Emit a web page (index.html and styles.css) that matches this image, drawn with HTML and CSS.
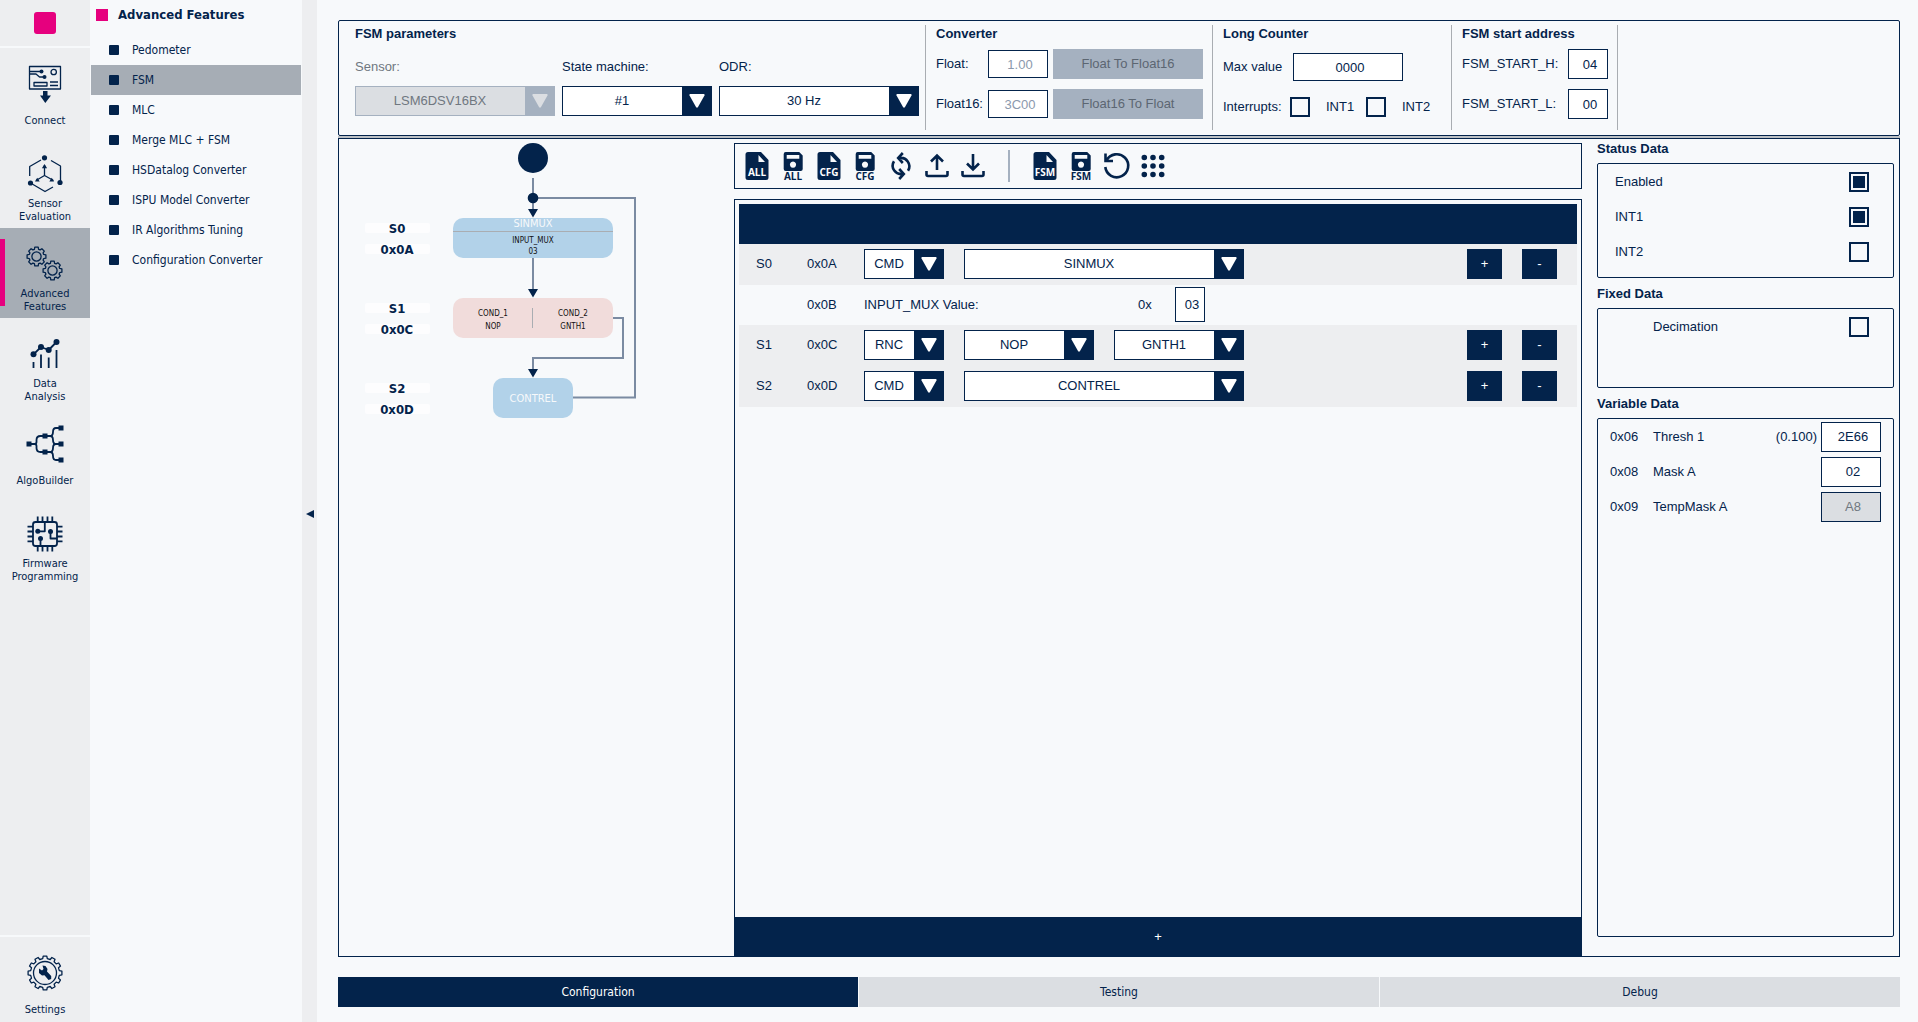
FILE: index.html
```html
<!DOCTYPE html>
<html lang="en">
<head>
<meta charset="utf-8">
<title>Advanced Features - FSM</title>
<link rel="stylesheet" href="styles.css">
</head>
<body>
<svg class="defs" aria-hidden="true">
  <symbol id="arrow-down" viewBox="0 0 16 14"><path d="M1 0h14q1 .5.5 1.500L9 13q-1 1.500-2 0L.5 1.500Q0 .5 1 0z"/></symbol>
  <symbol id="gear" viewBox="-11 -11 22 22"><path d="M7.200-2.100 9.400-1.700V1.700L7.200 2.100 6.600 3.600 7.800 5.400 5.400 7.800 3.600 6.600 2.100 7.200 1.700 9.400H-1.700L-2.100 7.200-3.600 6.600-5.400 7.800-7.800 5.400-6.600 3.600-7.200 2.100-9.400 1.700V-1.700L-7.200-2.100-6.600-3.600-7.800-5.400-5.400-7.800-3.600-6.600-2.100-7.200-1.700-9.400H1.700L2.100-7.200 3.600-6.600 5.400-7.800 7.800-5.400 6.600-3.600z"/><circle r="4.600"/></symbol>
  <symbol id="file" viewBox="0 0 36 36"><path fill-rule="evenodd" d="M9 4h13l7.500 8v17.500a2.500 2.500 0 0 1-2.500 2.500H9a2.500 2.500 0 0 1-2.500-2.500v-23A2.500 2.500 0 0 1 9 4zm10.500 3v7H26z"/></symbol>
  <symbol id="disk" viewBox="0 0 36 36"><path fill-rule="evenodd" d="M10.700 4h13.500l3.500 3.500V21a2 2 0 0 1-2 2h-15a2 2 0 0 1-2-2V6a2 2 0 0 1 2-2zm1 3v3.700h12.600V7zM18 13.500a3.100 3.100 0 1 0 .01 0z"/></symbol>
</svg>

<nav class="rail" aria-label="Sections">
  <div class="rail-logo"><span class="logo"></span></div>
  <a class="rail-item" href="#connect">
    <svg class="rail-icon" viewBox="0 0 38 38"><g class="line"><path d="M3.500 1.500h31V24h-31zM4 6.500h11M4 9h6l3.500 3H18M8 17.500h13v3.500H8zM24 17h8M24 20.500h8"/><circle cx="27.700" cy="7" r="2.700"/></g><circle cx="15.500" cy="6.500" r="2"/><circle cx="18.500" cy="12" r="2"/><path d="M17 26h4.500v4.500H25L19.300 38 14 30.500h3z"/></svg>
    <span>Connect</span>
  </a>
  <a class="rail-item" href="#sensor">
    <svg class="rail-icon" viewBox="0 0 38 38"><path class="line" d="M15 5 3.700 11.500V21M25 5.500l9.500 5.500v16M4.500 28 19 36.500l8-4.500M18.500 10v10.500L10 25.500M18.500 20.500l9 5"/><circle cx="18.500" cy="2.800" r="2.600"/><circle cx="34" cy="27.500" r="2.600"/><circle cx="4.500" cy="28" r="2.600"/><path d="M18.500 9l2.600 4.200h-5.200zM9 26.500l2.200-3.800 2.500 3.900zM28 26.500l-2.200-3.800-2.500 3.900z"/></svg>
    <span>Sensor<br>Evaluation</span>
  </a>
  <a class="rail-item active" href="#advanced">
    <svg class="rail-icon" viewBox="0 0 38 38"><g class="line"><use href="#gear" x="-.5" y=".5" width="22" height="22"/><use href="#gear" x="15.500" y="14.500" width="22" height="22"/></g></svg>
    <span>Advanced<br>Features</span>
  </a>
  <a class="rail-item" href="#data">
    <svg class="rail-icon" viewBox="0 0 38 38"><path class="line heavy" d="M7.500 19.300 15 12l7.700 3 7.800-8M7.500 27v6M15 19.500V33M22.700 22.500V33M30.500 15v18"/><circle cx="7.500" cy="19.300" r="3"/><circle cx="15" cy="12" r="3"/><circle cx="22.700" cy="15" r="3"/><circle cx="30.500" cy="7" r="3"/></svg>
    <span>Data<br>Analysis</span>
  </a>
  <a class="rail-item" href="#algo">
    <svg class="rail-icon" viewBox="0 0 38 38"><path class="line heavy" d="M3 19h5.500q2 0 2-2v-2q0-4 4-4H24q3 0 3-4t3-4h5M8.500 19q2 0 2 2v2q0 4 4 4H24q3 0 3 4t3 4h5M24 11q3 0 3 4t3 4h5M24 27q3 0 3-4t3-4"/><path d="M.5 16.500h5v5h-5zM16.500 8.500h5v5h-5zM16.500 24.500h5v5h-5zM32.500.5h5v5h-5zM32.500 16.500h5v5h-5zM32.500 32.500h5v5h-5z"/></svg>
    <span>AlgoBuilder</span>
  </a>
  <a class="rail-item" href="#firmware">
    <svg class="rail-icon" viewBox="0 0 38 38"><g class="line heavy"><rect x="7" y="7" width="24" height="24" rx="2.500"/><path d="M11.700 1.500V7M16.500 1.500V7M21.500 1.500V7M26.300 1.500V7M11.700 31v5.500M16.500 31v5.500M21.500 31v5.500M26.300 31v5.500M1.500 11.700H7M1.500 16.500H7M1.500 21.500H7M1.500 26.300H7M31 11.700h5.500M31 16.500h5.500M31 21.500h5.500M31 26.300h5.500M11.800 16.300h7V7M24.500 16.500v7H31M14.500 23.500V31"/></g><circle cx="11.800" cy="16.300" r="2.500"/><circle cx="24.500" cy="16.500" r="2.500"/><circle cx="14.500" cy="23.500" r="2.500"/></svg>
    <span>Firmware<br>Programming</span>
  </a>
  <a class="rail-item rail-settings" href="#settings">
    <svg class="rail-icon" viewBox="-19 -19 38 38"><g class="line"><path d="M14.300-2.300 16.900-1.800V1.800L14.300 2.300 13.500 5.200 15.500 6.900 13.700 10 11.200 9.100 9.100 11.200 10 13.700 6.900 15.500 5.200 13.500 2.300 14.300 1.800 16.900H-1.800L-2.300 14.300-5.200 13.500-6.900 15.500-10 13.700-9.100 11.200-11.200 9.100-13.700 10-15.500 6.900-13.500 5.200-14.300 2.300-16.900 1.800V-1.800L-14.300-2.300-13.500-5.200-15.500-6.900-13.700-10-11.200-9.100-9.100-11.200-10-13.700-6.900-15.500-5.200-13.500-2.300-14.300-1.800-16.900H1.800L2.300-14.300 5.200-13.500 6.900-15.500 10-13.700 9.100-11.200 11.200-9.100 13.700-10 15.500-6.900 13.500-5.200z"/><circle r="11.500"/></g><path d="M-6-4.500V0l3 2.500 2.500-.3L3.500 7l2.700-1V3L2-1.500 2.500-4 .5-7-2.500-7.500-1.500-4-3-2.500z"/></svg>
    <span>Settings</span>
  </a>
</nav>

<aside class="subnav">
  <h1>Advanced Features</h1>
  <ul>
    <li><a href="#pedometer">Pedometer</a></li>
    <li><a class="current" href="#fsm">FSM</a></li>
    <li><a href="#mlc">MLC</a></li>
    <li><a href="#merge">Merge MLC + FSM</a></li>
    <li><a href="#hsdatalog">HSDatalog Converter</a></li>
    <li><a href="#ispu">ISPU Model Converter</a></li>
    <li><a href="#ir">IR Algorithms Tuning</a></li>
    <li><a href="#config">Configuration Converter</a></li>
  </ul>
</aside>
<button class="collapse" aria-label="Collapse menu"><svg width="8" height="8" viewBox="0 0 8 8"><path d="M8 0v8L0 4z"/></svg></button>

<main>
  <div class="params">
    <section class="param-machine">
      <h2>FSM parameters</h2>
      <div class="combos">
        <div class="disabled wide"><label for="sensor">Sensor:</label>
          <span class="combo"><select id="sensor" disabled><option>LSM6DSV16BX</option></select><i><svg><use href="#arrow-down"/></svg></i></span></div>
        <div><label for="machine">State machine:</label>
          <span class="combo"><select id="machine"><option>#1</option></select><i><svg><use href="#arrow-down"/></svg></i></span></div>
        <div class="wide"><label for="odr">ODR:</label>
          <span class="combo"><select id="odr"><option>30 Hz</option></select><i><svg><use href="#arrow-down"/></svg></i></span></div>
      </div>
    </section>
    <section class="param-converter">
      <h2>Converter</h2>
      <div class="grid">
        <label for="float">Float:</label><input id="float" class="hint" value="1.00"><button disabled>Float To Float16</button>
        <label for="float16">Float16:</label><input id="float16" class="hint" value="3C00"><button disabled>Float16 To Float</button>
      </div>
    </section>
    <section class="param-counter">
      <h2>Long Counter</h2>
      <div class="max-row"><label for="maxv">Max value</label><input id="maxv" value="0000"></div>
      <div class="int-row"><span>Interrupts:</span>
        <input type="checkbox" id="lc1"><label for="lc1">INT1</label>
        <input type="checkbox" id="lc2"><label for="lc2">INT2</label></div>
    </section>
    <section class="param-address">
      <h2>FSM start address</h2>
      <div class="grid">
        <label for="sth">FSM_START_H:</label><input id="sth" value="04">
        <label for="stl">FSM_START_L:</label><input id="stl" value="00">
      </div>
    </section>
  </div>
  <div class="splitter"></div>

  <div class="workspace">
    <div class="diagram">
      <svg width="394" height="300" viewBox="0 0 394 300">
        <g class="wires">
          <path d="M194 39v35M199 59h97v199.500h-62M194 119v35M274 179h10v40h-90v15"/>
        </g>
        <g class="ink">
          <circle cx="194" cy="19" r="15"/><circle cx="194" cy="59" r="5.300"/>
          <path d="M189 70h10l-5 8.500zM189 150h10l-5 8.500zM189 230h10l-5 8.500z"/>
        </g>
        <rect class="cmd" x="114" y="79" width="160" height="40" rx="10"/>
        <path class="rule" d="M114 92.500h160"/>
        <text class="node-name" x="194" y="88">SINMUX</text>
        <text class="node-arg" x="194" y="104">INPUT_MUX</text>
        <text class="node-arg" x="194" y="115">03</text>
        <rect class="rnc" x="114" y="159" width="160" height="40" rx="10"/>
        <path class="rule" d="M193.500 169v20"/>
        <text class="node-arg" x="154" y="177">COND_1</text>
        <text class="node-arg" x="154" y="190">NOP</text>
        <text class="node-arg" x="234" y="177">COND_2</text>
        <text class="node-arg" x="234" y="190">GNTH1</text>
        <rect class="cmd" x="154" y="239" width="80" height="40" rx="10"/>
        <text class="node-name" x="194" y="263">CONTREL</text>
        <g class="tags">
          <rect x="26" y="84" width="65" height="10" rx="2"/><rect x="26" y="105" width="65" height="10" rx="2"/>
          <rect x="26" y="164" width="65" height="10" rx="2"/><rect x="26" y="185" width="65" height="10" rx="2"/>
          <rect x="26" y="244" width="65" height="10" rx="2"/><rect x="26" y="265" width="65" height="10" rx="2"/>
          <text x="58" y="94">S0</text><text x="58" y="115">0x0A</text>
          <text x="58" y="174">S1</text><text x="58" y="195">0x0C</text>
          <text x="58" y="254">S2</text><text x="58" y="275">0x0D</text>
        </g>
      </svg>
    </div>

    <div class="editor">
      <div class="toolbar" role="toolbar">
        <button aria-label="Load all"><svg viewBox="0 0 36 36"><use href="#file"/><text class="on" x="18" y="28">ALL</text></svg></button>
        <button aria-label="Save all"><svg viewBox="0 0 36 36"><use href="#disk"/><text x="18" y="32">ALL</text></svg></button>
        <button aria-label="Load configuration"><svg viewBox="0 0 36 36"><use href="#file"/><text class="on" x="18" y="28">CFG</text></svg></button>
        <button aria-label="Save configuration"><svg viewBox="0 0 36 36"><use href="#disk"/><text x="18" y="32">CFG</text></svg></button>
        <button aria-label="Refresh"><svg viewBox="0 0 36 36"><path class="stroke" d="M16 10.200a8.300 8.300 0 0 1 9 12.500M19.800 5l-4.600 5 4.600 5M20 25.800a8.300 8.300 0 0 1-9-12.500M16.200 31l4.600-5-4.600-5"/></svg></button>
        <button aria-label="Upload"><svg viewBox="0 0 36 36"><path class="stroke" d="M18 22V8M12 13.500l6-6 6 6M7.500 23v3.500q0 1.500 1.500 1.500h18q1.500 0 1.500-1.500V23"/></svg></button>
        <button aria-label="Download"><svg viewBox="0 0 36 36"><path class="stroke" d="M18 6v15M12 15.500l6 6 6-6M7.500 23v3.500q0 1.500 1.500 1.500h18q1.500 0 1.500-1.500V23"/></svg></button>
        <span class="bar"></span>
        <button aria-label="Load FSM"><svg viewBox="0 0 36 36"><use href="#file"/><text class="on" x="18" y="28">FSM</text></svg></button>
        <button aria-label="Save FSM"><svg viewBox="0 0 36 36"><use href="#disk"/><text x="18" y="32">FSM</text></svg></button>
        <button aria-label="Reset"><svg viewBox="0 0 36 36"><path class="stroke" d="M6.500 5.500v7.500H14M7.500 12.500a11.500 11.500 0 1 1-1.200 6.500"/></svg></button>
        <button aria-label="Grid"><svg viewBox="0 0 36 36"><path class="dots" d="M9.300 9.500h0M18 9.500h0M26.700 9.500h0M9.300 18h0M18 18h0M26.700 18h0M9.300 26.500h0M18 26.500h0M26.700 26.500h0"/></svg></button>
      </div>

      <div class="steps">
        <div class="steps-body">
          <table>
            <colgroup><col class="c-state"><col class="c-addr"><col class="c-type"><col class="c-op"><col><col class="c-act"></colgroup>
            <thead><tr><th colspan="6"></th></tr></thead>
            <tbody>
              <tr>
                <td>S0</td><td>0x0A</td>
                <td><span class="combo type"><select aria-label="S0 type"><option>CMD</option></select><i><svg><use href="#arrow-down"/></svg></i></span></td>
                <td colspan="2"><span class="combo full"><select aria-label="S0 command"><option>SINMUX</option></select><i><svg><use href="#arrow-down"/></svg></i></span></td>
                <td><div class="acts"><button>+</button><button>-</button></div></td>
              </tr>
              <tr class="sub">
                <td></td><td>0x0B</td>
                <td colspan="2"><label for="mux">INPUT_MUX Value:</label></td>
                <td colspan="2"><div class="hex"><span>0x</span><input id="mux" value="03"></div></td>
              </tr>
              <tr>
                <td>S1</td><td>0x0C</td>
                <td><span class="combo type"><select aria-label="S1 type"><option>RNC</option></select><i><svg><use href="#arrow-down"/></svg></i></span></td>
                <td><span class="combo half"><select aria-label="S1 reset condition"><option>NOP</option></select><i><svg><use href="#arrow-down"/></svg></i></span></td>
                <td><span class="combo half"><select aria-label="S1 next condition"><option>GNTH1</option></select><i><svg><use href="#arrow-down"/></svg></i></span></td>
                <td><div class="acts"><button>+</button><button>-</button></div></td>
              </tr>
              <tr>
                <td>S2</td><td>0x0D</td>
                <td><span class="combo type"><select aria-label="S2 type"><option>CMD</option></select><i><svg><use href="#arrow-down"/></svg></i></span></td>
                <td colspan="2"><span class="combo full"><select aria-label="S2 command"><option>CONTREL</option></select><i><svg><use href="#arrow-down"/></svg></i></span></td>
                <td><div class="acts"><button>+</button><button>-</button></div></td>
              </tr>
            </tbody>
          </table>
        </div>
        <button class="add">+</button>
      </div>
    </div>

    <aside class="data">
      <h2>Status Data</h2>
      <div class="box status">
        <div class="row"><label for="en">Enabled</label><input type="checkbox" id="en" checked></div>
        <div class="row"><label for="i1">INT1</label><input type="checkbox" id="i1" checked></div>
        <div class="row"><label for="i2">INT2</label><input type="checkbox" id="i2"></div>
      </div>
      <h2>Fixed Data</h2>
      <div class="box fixed">
        <div class="row"><label for="dec">Decimation</label><input type="checkbox" id="dec"></div>
      </div>
      <h2>Variable Data</h2>
      <div class="box variable">
        <div class="row"><span>0x06</span><label for="v6">Thresh 1</label><output>(0.100)</output><input id="v6" value="2E66"></div>
        <div class="row"><span>0x08</span><label for="v8">Mask A</label><input id="v8" value="02"></div>
        <div class="row"><span>0x09</span><label for="v9">TempMask A</label><input id="v9" value="A8" disabled></div>
      </div>
    </aside>
  </div>

  <nav class="tabs" aria-label="Pages">
    <button class="current">Configuration</button>
    <button>Testing</button>
    <button>Debug</button>
  </nav>
</main>
</body>
</html>
```
FILE: styles.css
```css
:root {
  --navy: #03234b;
  --pink: #e6007e;
  --page: #f7f9fb;
  --band: #edeef0;
  --selected: #a6adb5;
  --muted: #a5b1c0;
  --soft: #dbdee2;
  --ui: "DejaVu Sans Condensed", "DejaVu Sans", sans-serif;
  --form: "Liberation Sans", Arial, sans-serif;
}
* { box-sizing: border-box; }
body {
  margin: 0;
  display: flex;
  min-height: 100vh;
  background: var(--page);
  color: var(--navy);
  font: 13px/18px var(--form);
}
.defs { position: absolute; width: 0; height: 0; }
svg { display: block; fill: var(--navy); }
button, input, select { font: inherit; color: inherit; margin: 0; border-radius: 0; }
button { border: 0; padding: 0; background: none; }
a { color: inherit; text-decoration: none; }
h1, h2 { margin: 0; font-size: 13px; }

/* Icon rail */
.rail { display: flex; flex-direction: column; width: 90px; flex: none; background: var(--band); font: 11px/13px var(--ui); }
.rail-logo { display: grid; place-items: center; height: 48px; border-bottom: 2px solid var(--page); }
.logo { width: 22px; height: 22px; border-radius: 3px; background: var(--pink); }
.rail-item { display: flex; flex-direction: column; align-items: center; height: 90px; padding-top: 17px; }
.rail-item span { display: grid; place-content: center; height: 26px; margin-top: 4px; text-align: center; }
.rail-item.active { background: linear-gradient(var(--pink), var(--pink)) 0 11px / 5px 67px no-repeat var(--selected); }
.rail-icon { width: 38px; height: 38px; }
.rail-settings { height: 87px; margin-top: auto; border-top: 2px solid var(--page); }
.line { fill: none; stroke: var(--navy); stroke-width: 1.300; stroke-linejoin: round; }
.line.heavy { stroke-width: 1.800; }

/* Feature list */
.subnav { width: 212px; flex: none; padding: 0 1px; font: 12px/30px var(--ui); }
.subnav h1 { display: flex; align-items: center; gap: 10px; height: 30px; margin-bottom: 5px; padding-left: 5px; }
.subnav h1::before { content: ""; width: 12px; height: 12px; background: var(--pink); }
.subnav ul { margin: 0; padding: 0; list-style: none; }
.subnav a { display: flex; align-items: center; gap: 13px; height: 30px; padding-left: 18px; }
.subnav a::before { content: ""; width: 10px; height: 10px; border-radius: 1px; background: var(--navy); }
.subnav .current { background: var(--selected); }
.collapse { display: grid; place-items: center; width: 15px; flex: none; padding-top: 5px; background: var(--band); }

main { display: flex; flex-direction: column; flex: 1; min-width: 0; padding: 20px 18px 15px 21px; }

/* Controls */
.combo { display: grid; width: 100%; height: 30px; }
.combo select { grid-area: 1 / 1; appearance: none; width: 100%; padding: 0 30px 0 0; border: 1px solid var(--navy); background: #fff; text-align-last: center; opacity: 1; }
.combo i { grid-area: 1 / 1; justify-self: end; display: grid; place-items: center; width: 30px; background: var(--navy); pointer-events: none; }
.combo svg { width: 16px; height: 14px; fill: #fff; }
.disabled { color: #6f7780; }
.disabled .combo select { background: var(--soft); border-color: var(--muted); }
.disabled .combo i { background: var(--muted); }
.disabled .combo svg { fill: var(--soft); }
input:not([type="checkbox"]) { min-width: 0; height: 30px; padding: 0 0 0 4px; border: 1px solid var(--navy); background: #fff; text-align: center; }
input.hint { color: #8b99ad; }
input:disabled:not([type="checkbox"]) { background: var(--soft); color: #6f7780; }
input[type="checkbox"] { appearance: none; flex: none; width: 20px; height: 20px; border: 2px solid var(--navy); background: var(--page); }
input[type="checkbox"]:checked { background: var(--navy); box-shadow: inset 0 0 0 2px var(--page); }

/* Parameter strip */
.params { display: flex; height: 116px; padding: 4px 0 5px; border: 1px solid var(--navy); border-radius: 2px; }
.params section { padding: 0 9px 0 10px; border-right: 1px solid #a9adb2; }
.params .param-machine { padding: 0 6px 0 16px; }
.combos { display: flex; gap: 7px; margin-top: 15px; }
.combos > div { display: grid; gap: 10px; width: 150px; }
.combos .wide { width: 200px; }
.grid { display: grid; grid-auto-rows: 30px; row-gap: 10px; align-items: center; margin-top: 6px; }
.param-converter .grid { grid-template-columns: 52px 60px 155px; }
.param-converter input, .max-row input { height: 28px !important; }
.param-converter button { height: 30px; margin-left: 5px; background: var(--muted); color: #5c6672; }
.param-address .grid { grid-template-columns: 106px 40px; }
.max-row { display: flex; align-items: center; margin-top: 10px; }
.max-row label { width: 70px; }
.max-row input { width: 110px; }
.int-row { display: flex; align-items: center; gap: 16px; width: 219px; margin-top: 16px; }
.int-row span { width: 67px; margin-right: -16px; }
.int-row label { width: 24px; }
.splitter { height: 2px; background: #bcc1c5; }

/* Workspace */
.workspace { display: grid; grid-template-columns: 395px 1fr 317px; flex: 1; border: 1px solid var(--navy); }
.wires { fill: none; stroke: #7b8ba2; stroke-width: 2; }
.rule { stroke: #a9adb2; fill: none; }
.cmd { fill: #b2d2e9; }
.rnc { fill: #f1dcdb; }
.diagram text { font-family: var(--ui); text-anchor: middle; }
.node-name { fill: #f7f9fb; font-size: 11px; }
.node-arg { fill: #111; font-size: 8px; }
.tags rect { fill: #fdfdfe; }
.tags text { font-size: 13px; font-weight: bold; }

.editor { display: flex; flex-direction: column; padding-top: 4px; }
.toolbar { display: flex; align-items: center; height: 46px; padding-left: 4px; border: 1px solid var(--navy); }
.toolbar button { width: 36px; height: 36px; }
.toolbar svg { width: 36px; height: 36px; }
.toolbar text { font: bold 10px "Open Sans", sans-serif; text-anchor: middle; }
.toolbar .on { fill: #fff; }
.toolbar .bar { width: 2px; height: 32px; margin: 0 17px; background: var(--muted); }
.stroke { fill: none; stroke: var(--navy); stroke-width: 2.600; }
.dots { stroke: var(--navy); stroke-width: 5.600; stroke-linecap: round; }

.steps { display: flex; flex-direction: column; flex: 1; margin-top: 10px; border: 1px solid var(--navy); border-bottom: 0; }
.steps-body { flex: 1; padding: 4px; }
.steps table { width: 100%; table-layout: fixed; border-collapse: collapse; }
.c-state { width: 68px; }
.c-addr { width: 57px; }
.c-type { width: 100px; }
.c-op { width: 150px; }
.c-act { width: 110px; }
.steps th { height: 40px; padding: 0; background: var(--navy); }
.steps td { padding: 5px 0 6px; background: var(--band); }
.steps td:first-child { padding-left: 17px; }
.steps .sub td { padding: 2px 0 3px; background: var(--page); }
.combo.type { width: 80px; }
.combo.full { width: 280px; }
.combo.half { width: 130px; }
.acts { display: flex; gap: 20px; }
.acts button { width: 35px; height: 30px; background: var(--navy); color: #fff; }
.hex { display: flex; align-items: center; padding-left: 24px; }
.hex span { width: 37px; }
.hex input:not([type="checkbox"]) { width: 30px; height: 35px; }
.add { height: 39px; background: var(--navy); color: #fff; }

/* Data panel */
.data { display: flex; flex-direction: column; padding: 0 5px 19px 15px; }
.data h2 { margin-bottom: 5px; line-height: 19px; }
.box { border: 1px solid var(--navy); border-radius: 2px; }
.box + h2 { margin-top: 6px; }
.row { display: flex; align-items: center; height: 35px; }
.row label { flex: 1; }
.status { height: 115px; padding: 0 24px 0 17px; }
.fixed { height: 80px; padding: 0 24px 0 55px; }
.variable { flex: 1; padding: 0 12px; }
.variable span { width: 43px; }
.variable output { margin-right: 4px; }
.variable input { width: 60px; }

.tabs { display: flex; gap: 1px; margin-top: 20px; font: 12px/30px var(--ui); }
.tabs button { flex: 1; height: 30px; background: var(--soft); }
.tabs .current { background: var(--navy); color: #fff; }
```
